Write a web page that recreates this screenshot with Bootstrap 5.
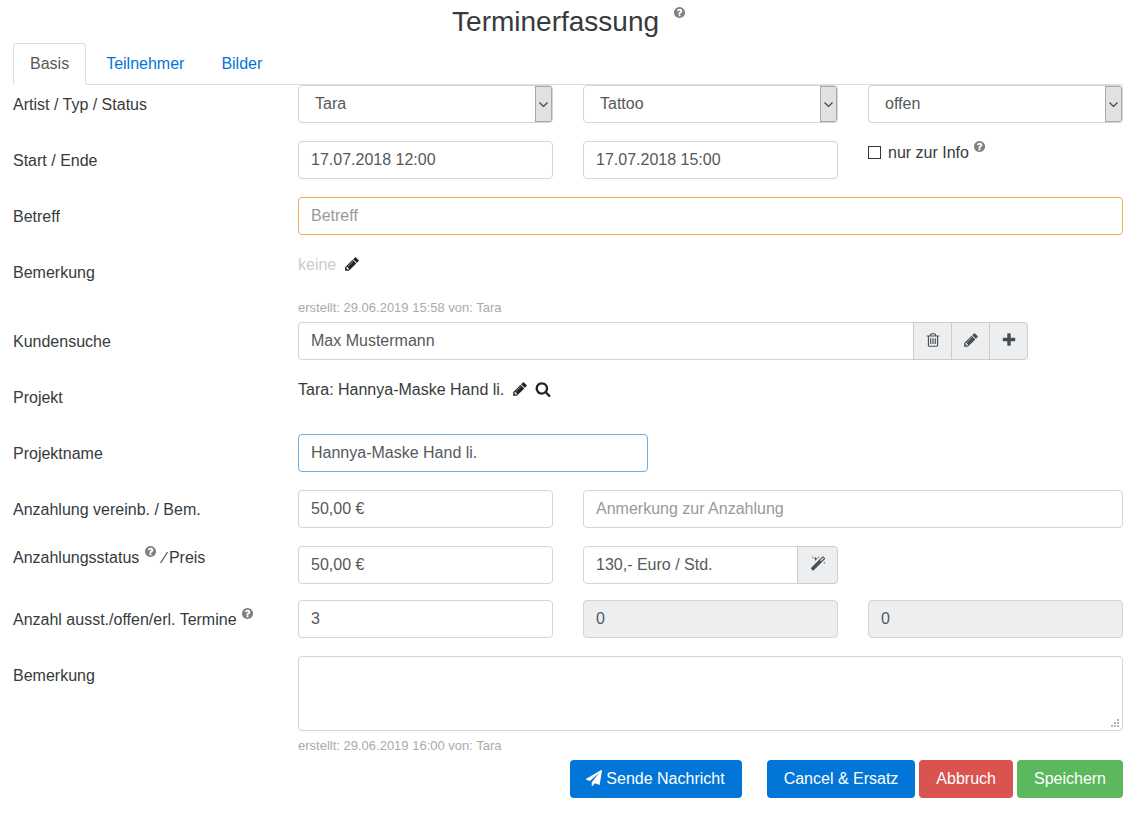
<!DOCTYPE html>
<html lang="de">
<head>
<meta charset="utf-8">
<meta name="viewport" content="width=device-width, initial-scale=1">
<title>Terminerfassung</title>
<link href="https://cdn.jsdelivr.net/npm/bootstrap@5.3.0/dist/css/bootstrap.min.css" rel="stylesheet">
<style>
  body { font-family: "Liberation Sans", Arial, sans-serif; color: #373a3c; line-height: 24px; }
  .page { padding: 0 11px 0 13px; overflow-x: clip; }
  .page .row { --bs-gutter-x: 30px; margin-bottom: 16px; }
  .page-title { font-size: 28px; line-height: 34px; font-weight: 400; margin: 0; padding: 5px 0 4px 2px; }
  .icon { width: 16px; height: 16px; fill: currentColor; vertical-align: -2px; }
  .hint { border: 0; padding: 0; margin: -6px 0; background: none; color: #818181; line-height: 1; display: inline-flex; vertical-align: 5px; }
  .hint .icon { width: 13px; height: 13px; }
  .page-title .hint { vertical-align: 12px; margin-left: 6px; }
  .slash { margin: 0 3px 0 2px; }

  .nav-tabs { --bs-nav-tabs-border-color: #ddd; --bs-nav-tabs-link-active-color: #55595c; --bs-nav-tabs-link-active-border-color: #ddd #ddd #fff; --bs-nav-tabs-border-radius: 4px; gap: 3px; }
  .nav-tabs .nav-link { color: #0275d8; padding: 8px 16px; }
  .nav-tabs .nav-link.active { color: #55595c; }

  .col-form-label { padding: 8px 15px; line-height: 24px; }
  .form-control, .form-select { color: #55595c; border-color: #d4d4d4; border-radius: 4px; line-height: 24px; }
  .form-control::placeholder { color: #999; }
  .form-control:disabled { background: #eceeef; color: #55595c; }
  .form-control.is-required { border-color: #f0ad4e; }
  .form-control.is-current { border-color: #66afe9; }
  .form-select {
    padding: 6px 24px 6px 16px;
    background: url("data:image/svg+xml,%3Csvg xmlns='http://www.w3.org/2000/svg' width='17' height='36'%3E%3Crect x='.5' y='.5' width='16' height='35' fill='%23e1e1e1' stroke='%23a9a9a9'/%3E%3Cpath d='M4.500 16.500l4 4 4-4' fill='none' stroke='%23444' stroke-width='1.200'/%3E%3C/svg%3E") right center / 17px 36px no-repeat #fff;
  }
  .plain-check { appearance: none; width: 13px; height: 13px; border: 1px solid #333; background: #fff; margin: 0 7px 0 0; vertical-align: -1px; }
  .plain-check:checked { background: #0275d8; }
  .icon-btn { border: 0; background: none; padding: 0; color: #222; line-height: 1; margin-left: 3px; }
  .input-group .btn { --bs-btn-bg: #eceeef; --bs-btn-border-color: #ccc; --bs-btn-color: #4a4e51; border-radius: 4px; padding: 6px 10px 6px 11px; line-height: 24px; }
  .input-group .btn-wide { padding: 6px 11px 6px 12px; }
  .stamp { font-size: 13px; line-height: 21px; color: #aaa; }
  .note { height: 75px; }
  .note::-webkit-resizer {
    background: url("data:image/svg+xml,%3Csvg xmlns='http://www.w3.org/2000/svg' width='12' height='12' fill='%23b5b5b5'%3E%3Cpath d='M7 1h2v2h-2zM4 4h2v2h-2zM7 4h2v2h-2zM1 7h2v2h-2zM4 7h2v2h-2zM7 7h2v2h-2z'/%3E%3C/svg%3E") right bottom no-repeat;
  }
  .empty { color: #ccc; }

  .actions .btn { --bs-btn-color: #fff; border: 1px solid transparent; border-radius: 4px; padding: 6px 16px; line-height: 24px; color: #fff; }
  .act-primary { background: #0275d8; }
  .act-danger { background: #d9534f; }
  .act-success { background: #5cb85c; }
  .actions .act-send { margin-right: 21px; padding-left: 15px; }
</style>
</head>
<body>
<svg class="d-none" xmlns="http://www.w3.org/2000/svg">
  <symbol id="i-help" viewBox="0 0 1792 1792"><path d="M1024 1376v-192q0-14-9-23t-23-9h-192q-14 0-23 9t-9 23v192q0 14 9 23t23 9h192q14 0 23-9t9-23zm256-672q0-88-55.500-163t-138.500-116-170-41q-243 0-371 213-15 24 8 42l132 100q7 6 19 6 16 0 25-12 53-68 86-92 34-24 86-24 48 0 85.500 26t37.500 59q0 38-20 61t-68 45q-63 28-115.500 86.500t-52.500 125.500v36q0 14 9 23t23 9h192q14 0 23-9t9-23q0-19 21.500-49.500t54.500-49.500q32-18 49-28.500t46-35 44.500-48 28-60.500 12.500-81zm384 192q0 209-103 385.500t-279.500 279.500-385.500 103-385.500-103-279.500-279.500-103-385.500 103-385.500 279.500-279.500 385.500-103 385.500 103 279.500 279.500 103 385.500z"/></symbol>
  <symbol id="i-pencil" viewBox="0 0 1792 1792"><path d="M491 1536l91-91-235-235-91 91v107h128v128h107zm523-928q0-22-22-22-10 0-17 7l-542 542q-7 7-7 17 0 22 22 22 10 0 17-7l542-542q7-7 7-17zm-54-192l416 416-832 832h-416v-416zm683 96q0 53-37 90l-166 166-416-416 166-165q36-38 90-38 53 0 91 38l235 234q37 39 37 91z"/></symbol>
  <symbol id="i-plus" viewBox="0 0 1792 1792"><path d="M1600 736v192q0 40-28 68t-68 28h-416v416q0 40-28 68t-68 28h-192q-40 0-68-28t-28-68v-416h-416q-40 0-68-28t-28-68v-192q0-40 28-68t68-28h416v-416q0-40 28-68t68-28h192q40 0 68 28t28 68v416h416q40 0 68 28t28 68z"/></symbol>
  <symbol id="i-trash" viewBox="0 0 1792 1792"><path d="M704 736v576q0 14-9 23t-23 9h-64q-14 0-23-9t-9-23v-576q0-14 9-23t23-9h64q14 0 23 9t9 23zm256 0v576q0 14-9 23t-23 9h-64q-14 0-23-9t-9-23v-576q0-14 9-23t23-9h64q14 0 23 9t9 23zm256 0v576q0 14-9 23t-23 9h-64q-14 0-23-9t-9-23v-576q0-14 9-23t23-9h64q14 0 23 9t9 23zm128 724v-948h-896v948q0 22 7 40.500t14.500 27 10.500 8.500h832q3 0 10.500-8.500t14.500-27 7-40.500zm-672-1076h448l-48-117q-7-9-17-11h-317q-10 2-17 11zm928 32v64q0 14-9 23t-23 9h-96v948q0 83-47 143.500t-113 60.500h-832q-66 0-113-58.500t-47-141.500v-952h-96q-14 0-23-9t-9-23v-64q0-14 9-23t23-9h309l70-167q15-37 54-63t79-26h320q40 0 79 26t54 63l70 167h309q14 0 23 9t9 23z"/></symbol>
  <symbol id="i-search" viewBox="0 0 1792 1792"><path d="M1216 832q0-185-131.500-316.500t-316.500-131.500-316.500 131.500-131.500 316.500 131.500 316.500 316.500 131.500 316.500-131.500 131.500-316.500zm512 832q0 52-38 90t-90 38q-54 0-90-38l-343-342q-179 124-399 124-143 0-273.500-55.500t-225-150-150-225-55.500-273.500 55.500-273.500 150-225 225-150 273.500-55.500 273.500 55.500 225 150 150 225 55.500 273.500q0 220-124 399l343 343q37 37 37 90z"/></symbol>
  <symbol id="i-magic" viewBox="0 0 1792 1792"><path d="M1254 581l293-293-107-107-293 293zm447-293q0 27-18 45l-1286 1286q-18 18-45 18t-45-18l-198-198q-18-18-18-45t18-45l1286-1286q18-18 45-18t45 18l198 198q18 18 18 45zm-1351-190l98 30-98 30-30 98-30-98-98-30 98-30 30-98zm350 162l196 60-196 60-60 196-60-196-196-60 196-60 60-196zm930 478l98 30-98 30-30 98-30-98-98-30 98-30 30-98zm-640-640l98 30-98 30-30 98-30-98-98-30 98-30 30-98z"/></symbol>
  <symbol id="i-send" viewBox="0 0 1792 1792"><path d="M1764 11q33 24 27 64l-256 1536q-5 29-32 45-14 8-31 8-11 0-24-5l-453-185-242 295q-18 23-49 23-13 0-22-4-19-7-30.500-23.500t-11.500-36.500v-349l864-1059-1069 925-395-162q-37-14-40-55-2-40 32-59l1664-960q15-9 32-9 20 0 36 11z"/></symbol>
</svg>

<main class="page">
  <h1 class="page-title text-center">Terminerfassung <button type="button" class="hint" aria-label="Hilfe"><svg class="icon"><use href="#i-help"/></svg></button></h1>

  <ul class="nav nav-tabs">
    <li class="nav-item"><a class="nav-link active" href="#basis" aria-current="page">Basis</a></li>
    <li class="nav-item"><a class="nav-link" href="#teilnehmer">Teilnehmer</a></li>
    <li class="nav-item"><a class="nav-link" href="#bilder">Bilder</a></li>
  </ul>

  <form id="basis">
    <div class="row">
      <label class="col-3 col-form-label" for="artist">Artist / Typ / Status</label>
      <div class="col-3"><select class="form-select" id="artist"><option>Tara</option></select></div>
      <div class="col-3"><select class="form-select" aria-label="Typ"><option>Tattoo</option></select></div>
      <div class="col-3"><select class="form-select" aria-label="Status"><option>offen</option></select></div>
    </div>

    <div class="row">
      <label class="col-3 col-form-label" for="start">Start / Ende</label>
      <div class="col-3"><input class="form-control" id="start" value="17.07.2018 12:00"></div>
      <div class="col-3"><input class="form-control" aria-label="Ende" value="17.07.2018 15:00"></div>
      <div class="col-3"><input type="checkbox" class="plain-check" id="info"><label for="info">nur zur Info</label> <button type="button" class="hint" aria-label="Hilfe"><svg class="icon"><use href="#i-help"/></svg></button></div>
    </div>

    <div class="row">
      <label class="col-3 col-form-label" for="betreff">Betreff</label>
      <div class="col-9"><input class="form-control is-required" id="betreff" placeholder="Betreff"></div>
    </div>

    <div class="row mb-1">
      <div class="col-3 col-form-label">Bemerkung</div>
      <div class="col-9">
        <div><span class="empty">keine</span> <button type="button" class="icon-btn" aria-label="Bemerkung bearbeiten"><svg class="icon"><use href="#i-pencil"/></svg></button></div>
        <div class="stamp pt-1 mt-3">erstellt: 29.06.2019 15:58 von: Tara</div>
      </div>
    </div>

    <div class="row">
      <label class="col-3 col-form-label" for="kunde">Kundensuche</label>
      <div class="col-8">
        <div class="input-group">
          <input class="form-control" id="kunde" value="Max Mustermann">
          <button type="button" class="btn" aria-label="Löschen"><svg class="icon"><use href="#i-trash"/></svg></button>
          <button type="button" class="btn" aria-label="Bearbeiten"><svg class="icon"><use href="#i-pencil"/></svg></button>
          <button type="button" class="btn" aria-label="Hinzufügen"><svg class="icon"><use href="#i-plus"/></svg></button>
        </div>
      </div>
    </div>

    <div class="row">
      <div class="col-3 col-form-label">Projekt</div>
      <div class="col-9">Tara: Hannya-Maske Hand li. <button type="button" class="icon-btn" aria-label="Projekt bearbeiten"><svg class="icon"><use href="#i-pencil"/></svg></button> <button type="button" class="icon-btn" aria-label="Projekt suchen"><svg class="icon"><use href="#i-search"/></svg></button></div>
    </div>

    <div class="row">
      <label class="col-3 col-form-label" for="projektname">Projektname</label>
      <div class="col-4"><input class="form-control is-current" id="projektname" value="Hannya-Maske Hand li."></div>
    </div>

    <div class="row">
      <label class="col-3 col-form-label" for="anzahlung">Anzahlung vereinb. / Bem.</label>
      <div class="col-3"><input class="form-control" id="anzahlung" value="50,00 €"></div>
      <div class="col-6"><input class="form-control" aria-label="Anmerkung zur Anzahlung" placeholder="Anmerkung zur Anzahlung"></div>
    </div>

    <div class="row">
      <div class="col-3"><label for="anzstatus">Anzahlungsstatus</label> <button type="button" class="hint" aria-label="Hilfe"><svg class="icon"><use href="#i-help"/></svg></button> <label for="preis"><span class="slash">&#8725;</span>Preis</label></div>
      <div class="col-3"><input class="form-control" id="anzstatus" value="50,00 €"></div>
      <div class="col-3">
        <div class="input-group">
          <input class="form-control" id="preis" value="130,- Euro / Std.">
          <button type="button" class="btn btn-wide" aria-label="Preis berechnen"><svg class="icon"><use href="#i-magic"/></svg></button>
        </div>
      </div>
    </div>

    <div class="row">
      <div class="col-3 col-form-label"><label for="ausst">Anzahl ausst./offen/erl. Termine</label> <button type="button" class="hint" aria-label="Hilfe"><svg class="icon"><use href="#i-help"/></svg></button></div>
      <div class="col-3"><input class="form-control" id="ausst" value="3"></div>
      <div class="col-3"><input class="form-control" aria-label="Offene Termine" value="0" disabled></div>
      <div class="col-3"><input class="form-control" aria-label="Erledigte Termine" value="0" disabled></div>
    </div>

    <div class="row mb-1">
      <label class="col-3 col-form-label" for="bemerkung">Bemerkung</label>
      <div class="col-9">
        <textarea class="form-control note" id="bemerkung"></textarea>
        <div class="stamp mt-1">erstellt: 29.06.2019 16:00 von: Tara</div>
      </div>
    </div>

    <div class="actions d-flex flex-wrap justify-content-end gap-1">
      <button type="button" class="btn act-primary act-send"><svg class="icon"><use href="#i-send"/></svg> Sende Nachricht</button>
      <button type="button" class="btn act-primary">Cancel &amp; Ersatz</button>
      <button type="button" class="btn act-danger">Abbruch</button>
      <button type="submit" class="btn act-success">Speichern</button>
    </div>
  </form>
</main>
<script src="https://cdn.jsdelivr.net/npm/bootstrap@5.3.0/dist/js/bootstrap.bundle.min.js"></script>
</body>
</html>
